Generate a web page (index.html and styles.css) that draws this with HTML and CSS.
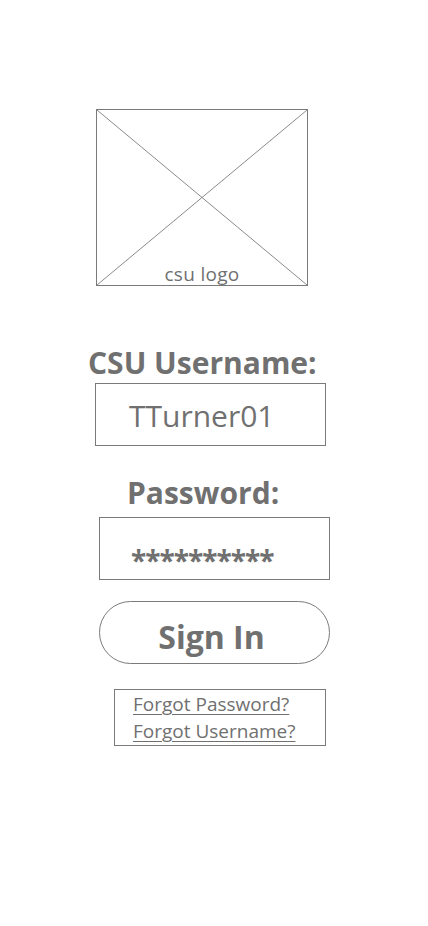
FILE: index.html
```html
<!DOCTYPE html>
<html lang="en">
<head>
<meta charset="utf-8">
<title>CSU Sign In</title>
<link rel="stylesheet" href="styles.css">
</head>
<body>
<main class="screen">
  <div class="logo">
    <svg class="logo-x" viewBox="0 0 210 175" preserveAspectRatio="none" aria-hidden="true">
      <line x1="0" y1="0" x2="210" y2="175"/>
      <line x1="210" y1="0" x2="0" y2="175"/>
    </svg>
    <span class="logo-text">csu logo</span>
  </div>
  <h1 class="label label-user">CSU Username:</h1>
  <div class="field field-user">TTurner01</div>
  <h2 class="label label-pass">Password:</h2>
  <div class="field field-pass">**********</div>
  <button class="signin" type="button">Sign In</button>
  <div class="links">
    <a href="#" class="link">Forgot Password?</a>
    <a href="#" class="link">Forgot Username?</a>
  </div>
</main>
</body>
</html>
```
FILE: styles.css
```css
* { box-sizing: border-box; }
html, body { margin: 0; padding: 0; background: #ffffff; }
body {
  font-family: "Open Sans", "Noto Sans", "Liberation Sans", sans-serif;
  color: #707070;
  width: 428px;
  height: 926px;
  overflow: hidden;
}
.screen {
  display: flex;
  flex-direction: column;
  align-items: flex-start;
  padding-top: 109px;
}
.logo {
  position: relative;
  margin-left: 96px;
  width: 212px;
  height: 177px;
  border: 1px solid #7a7a7a;
  display: flex;
  align-items: flex-end;
  justify-content: center;
}
.logo-x {
  position: absolute;
  inset: 0;
  width: 100%;
  height: 100%;
}
.logo-x line { stroke: #8a8a8a; stroke-width: 1; vector-effect: non-scaling-stroke; }
.logo-text {
  position: relative;
  font-size: 19px;
  line-height: 22px;
  margin-bottom: 0;
  letter-spacing: 0.3px;
}
.label {
  margin: 0;
  font-size: 30px;
  font-weight: 700;
  line-height: 36px;
}
.label-user { margin-left: 88px; margin-top: 59px; }
.label-pass { margin-left: 127px; margin-top: 29px; }
.field {
  width: 231px;
  height: 63px;
  border: 1px solid #7a7a7a;
  font-size: 30px;
  line-height: 60px;
}
.field-user {
  margin-left: 95px;
  margin-top: 2px;
  padding-left: 33px;
  padding-top: 2px;
}
.field-pass {
  margin-left: 99px;
  margin-top: 6px;
  padding-left: 31px;
  padding-top: 12px;
  font-weight: 700;
  font-size: 28px;
  letter-spacing: -1px;
}
.signin {
  margin-left: 99px;
  margin-top: 21px;
  width: 231px;
  height: 63px;
  border: 1px solid #7a7a7a;
  border-radius: 32px;
  background: #ffffff;
  color: #707070;
  font-family: inherit;
  font-size: 32px;
  font-weight: 700;
  line-height: 60px;
  padding: 5px 6px 0 0;
}
.links {
  margin-left: 114px;
  margin-top: 25px;
  width: 212px;
  height: 57px;
  border: 1px solid #7a7a7a;
  padding: 1px 0 0 18px;
  display: flex;
  flex-direction: column;
}
.link {
  color: #707070;
  font-size: 19px;
  line-height: 27px;
  text-decoration: underline;
  text-underline-offset: 3px;
  text-decoration-thickness: 1px;
}
```
